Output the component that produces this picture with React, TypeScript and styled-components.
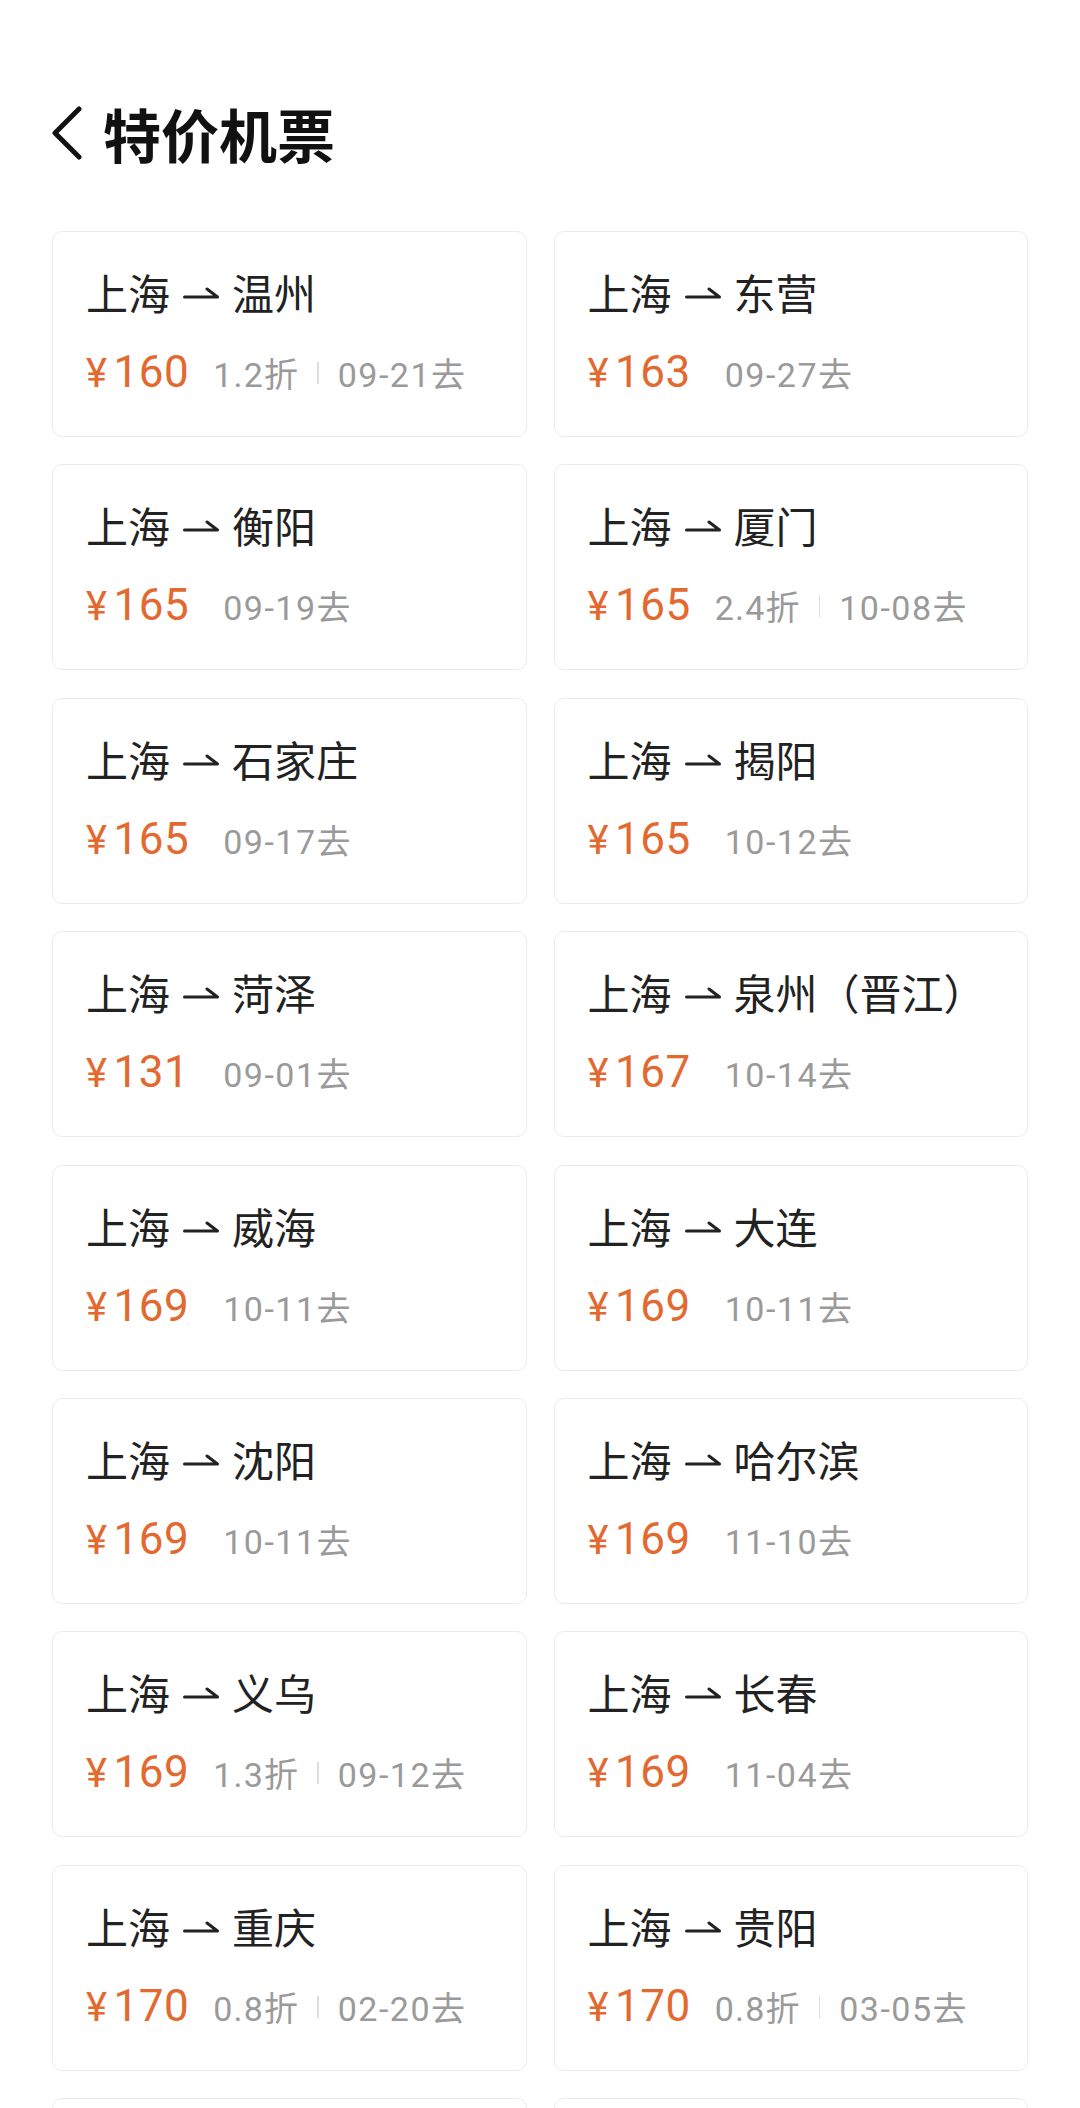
import styled, { createGlobalStyle } from "styled-components";

type Deal = {
    to: string
    price: number
    discount?: string
    date: string
}

const deals: Deal[] = [
    { to: '温州', price: 160, discount: '1.2折', date: '09-21去' },
    { to: '东营', price: 163, date: '09-27去' },
    { to: '衡阳', price: 165, date: '09-19去' },
    { to: '厦门', price: 165, discount: '2.4折', date: '10-08去' },
    { to: '石家庄', price: 165, date: '09-17去' },
    { to: '揭阳', price: 165, date: '10-12去' },
    { to: '菏泽', price: 131, date: '09-01去' },
    { to: '泉州（晋江）', price: 167, date: '10-14去' },
    { to: '威海', price: 169, date: '10-11去' },
    { to: '大连', price: 169, date: '10-11去' },
    { to: '沈阳', price: 169, date: '10-11去' },
    { to: '哈尔滨', price: 169, date: '11-10去' },
    { to: '义乌', price: 169, discount: '1.3折', date: '09-12去' },
    { to: '长春', price: 169, date: '11-04去' },
    { to: '重庆', price: 170, discount: '0.8折', date: '02-20去' },
    { to: '贵阳', price: 170, discount: '0.8折', date: '03-05去' },
]

const Arrow = () => (
    <ArrowSvg viewBox="0 0 36 12">
        <path d="M1.5 10H34.5L24 2" fill="none" stroke="#222" strokeWidth="3" strokeLinecap="round" strokeLinejoin="round" />
    </ArrowSvg>
)

const BackIcon = () => (
    <BackSvg viewBox="0 0 30 54">
        <path d="M27 3L3 27L27 51" fill="none" stroke="#111" strokeWidth="5" strokeLinecap="round" strokeLinejoin="round" />
    </BackSvg>
)

export default function App() {
    return (
        <>
            <GlobalStyle />
            <Page>
                <Header>
                    <BackButton><BackIcon /></BackButton>
                    <Title>特价机票</Title>
                </Header>
                <Grid>
                    {deals.map((item) => (
                        <Card key={item.to}>
                            <Route>
                                <span>上海</span>
                                <Arrow />
                                <span>{item.to}</span>
                            </Route>
                            <PriceRow>
                                <Price><Yen>¥</Yen>{item.price}</Price>
                                {item.discount && (
                                    <>
                                        <Discount>{item.discount}</Discount>
                                        <Divider />
                                    </>
                                )}
                                <DateText $alone={!item.discount}>{item.date}</DateText>
                            </PriceRow>
                        </Card>
                    ))}
                    <Card />
                    <Card />
                </Grid>
            </Page>
        </>
    )
}

const GlobalStyle = createGlobalStyle`
    body {
        margin: 0;
        background: #ffffff;
        font-family: Roboto, "Noto Sans CJK SC", sans-serif;
    }
`

const Page = styled.div`
    padding: 93px 52px 0;
`

const Header = styled.div`
    height: 80px;
    display: flex;
    align-items: center;
`

const BackButton = styled.button`
    background: none;
    border: none;
    padding: 0;
    margin: 0 21px 0 0;
    display: flex;
`

const BackSvg = styled.svg`
    width: 30px;
    height: 54px;
`

const Title = styled.h1`
    margin: 0;
    font-family: "Noto Sans CJK SC", sans-serif;
    font-size: 58px;
    font-weight: 700;
    line-height: 80px;
    color: #111;
`

const Grid = styled.div`
    margin-top: 58px;
    display: grid;
    grid-template-columns: 1fr 1fr;
    column-gap: 27px;
    row-gap: 27.4px;
`

const Card = styled.div`
    box-sizing: border-box;
    height: 206px;
    border: 1.5px solid #ebebeb;
    border-radius: 10px;
    background: #fff;
    padding: 35px 20px 0 33px;
`

const Route = styled.div`
    display: flex;
    align-items: center;
    font-family: "Noto Sans CJK SC", sans-serif;
    font-size: 42px;
    line-height: 50px;
    color: #222;
    white-space: nowrap;
`

const ArrowSvg = styled.svg`
    width: 36px;
    height: 12px;
    margin: 2px 13px 0;
`

const PriceRow = styled.div`
    margin-top: 30px;
    display: flex;
    align-items: baseline;
    white-space: nowrap;
`

const Price = styled.span`
    font-family: Roboto, sans-serif;
    font-size: 44px;
    line-height: 50px;
    letter-spacing: 0.5px;
    color: #e2692f;
`

const Yen = styled.span`
    font-size: 40px;
    margin-right: 6px;
`

const Discount = styled.span`
    margin-left: 24px;
    font-size: 34px;
    letter-spacing: 1.2px;
    color: #9a9a9a;
`

const Divider = styled.span`
    display: inline-block;
    width: 1.5px;
    height: 22px;
    background: #dedede;
    margin: 0 19px 0 18px;
    align-self: center;
`

const DateText = styled.span<{ $alone: boolean }>`
    margin-left: ${(p) => (p.$alone ? '34px' : '0')};
    font-size: 34px;
    letter-spacing: 1.5px;
    color: #9a9a9a;
`
